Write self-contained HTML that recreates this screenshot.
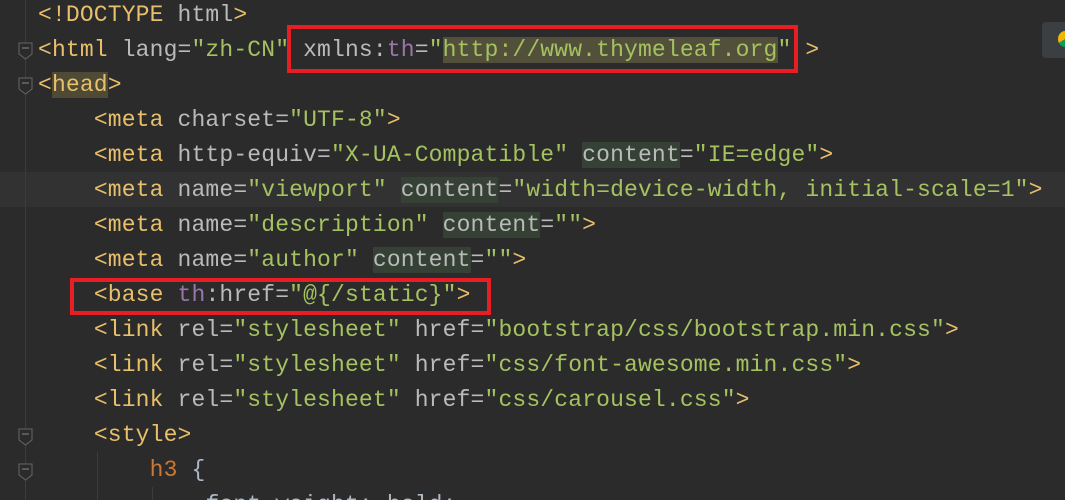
<!DOCTYPE html>
<html style="overflow:hidden;height:500px"><head><style>
body{margin:0;width:1065px;height:500px;overflow:hidden;background:#2b2b2b;font-family:"Liberation Mono",monospace;font-size:23px;position:relative}
.g{position:absolute;left:25px;top:0;width:1px;height:500px;background:#3c3c3c}
.ln{position:absolute;left:38px;height:35px;line-height:35px;white-space:pre;color:#bababa;letter-spacing:0.15px}
.t{color:#e8bf6a}.v{color:#a5c261}.p{color:#9876aa}.o{color:#cc7832}.w{color:#a9b7c6}
.hc{background:#344134}.hh{background:#4e4a36}.hu{background:#52503a}
.caret{position:absolute;left:0;top:172px;width:1065px;height:35px;background:#323232}
.box{position:absolute;border:4px solid #e81e25;box-sizing:border-box}
.fold{position:absolute;left:18px;width:15px;height:18px}
</style></head><body>
<div class="caret"></div>
<div class="g"></div>
<svg class="fold" style="top:42px" viewBox="0 0 15 18"><path d="M1 1H14V12L7.5 17L1 12Z" fill="#2b2b2b" stroke="#666"/><path d="M4 6H11" stroke="#888"/></svg>
<svg class="fold" style="top:77px" viewBox="0 0 15 18"><path d="M1 1H14V12L7.5 17L1 12Z" fill="#2b2b2b" stroke="#666"/><path d="M4 6H11" stroke="#888"/></svg>
<svg class="fold" style="top:428px" viewBox="0 0 15 18"><path d="M1 1H14V12L7.5 17L1 12Z" fill="#2b2b2b" stroke="#666"/><path d="M4 6H11" stroke="#888"/></svg>
<svg class="fold" style="top:463px" viewBox="0 0 15 18"><path d="M1 1H14V12L7.5 17L1 12Z" fill="#2b2b2b" stroke="#666"/><path d="M4 6H11" stroke="#888"/></svg>
<div style="position:absolute;left:97px;top:452px;width:1px;height:48px;background:#3c3c3c"></div>
<div style="position:absolute;left:152px;top:487px;width:1px;height:13px;background:#3c3c3c"></div>
<div style="position:absolute;left:1042px;top:22px;width:30px;height:36px;background:#3c3f41;border-radius:4px"></div>
<div style="position:absolute;left:1058px;top:31px;width:14px;height:16px;border-radius:50%;background:conic-gradient(#db4437 0 33%,#0f9d58 0 66%,#f4b400 0)"></div>
<div class="ln" style="top:-2px"><span class="t">&lt;!DOCTYPE </span>html<span class="t">&gt;</span></div>
<div class="ln" style="top:33px"><span class="t">&lt;html </span>lang=<span class="v">"zh-CN"</span> xmlns:<span class="p">th</span>=<span class="v">"<span class="hu">http://www.thymeleaf.org</span>"</span> <span class="t">&gt;</span></div>
<div class="ln" style="top:68px"><span class="t">&lt;<span class="hh">head</span>&gt;</span></div>
<div class="ln" style="top:103px">    <span class="t">&lt;meta </span>charset=<span class="v">"UTF-8"</span><span class="t">&gt;</span></div>
<div class="ln" style="top:138px">    <span class="t">&lt;meta </span>http-equiv=<span class="v">"X-UA-Compatible"</span> <span class="hc">content</span>=<span class="v">"IE=edge"</span><span class="t">&gt;</span></div>
<div class="ln" style="top:173px">    <span class="t">&lt;meta </span>name=<span class="v">"viewport"</span> <span class="hc">content</span>=<span class="v">"width=device-width, initial-scale=1"</span><span class="t">&gt;</span></div>
<div class="ln" style="top:208px">    <span class="t">&lt;meta </span>name=<span class="v">"description"</span> <span class="hc">content</span>=<span class="v">""</span><span class="t">&gt;</span></div>
<div class="ln" style="top:243px">    <span class="t">&lt;meta </span>name=<span class="v">"author"</span> <span class="hc">content</span>=<span class="v">""</span><span class="t">&gt;</span></div>
<div class="ln" style="top:278px">    <span class="t">&lt;base </span><span class="p">th</span>:href=<span class="v">"@{/static}"</span><span class="t">&gt;</span></div>
<div class="ln" style="top:313px">    <span class="t">&lt;link </span>rel=<span class="v">"stylesheet"</span> href=<span class="v">"bootstrap/css/bootstrap.min.css"</span><span class="t">&gt;</span></div>
<div class="ln" style="top:348px">    <span class="t">&lt;link </span>rel=<span class="v">"stylesheet"</span> href=<span class="v">"css/font-awesome.min.css"</span><span class="t">&gt;</span></div>
<div class="ln" style="top:383px">    <span class="t">&lt;link </span>rel=<span class="v">"stylesheet"</span> href=<span class="v">"css/carousel.css"</span><span class="t">&gt;</span></div>
<div class="ln" style="top:418px">    <span class="t">&lt;style&gt;</span></div>
<div class="ln" style="top:453px">        <span class="o">h3</span> <span class="w">{</span></div>
<div class="ln" style="top:488px">            <span class="w">font-weight: bold;</span></div>
<div class="box" style="left:287px;top:25px;width:511px;height:48px"></div>
<div class="box" style="left:70px;top:278px;width:421px;height:37px"></div>
</body></html>
